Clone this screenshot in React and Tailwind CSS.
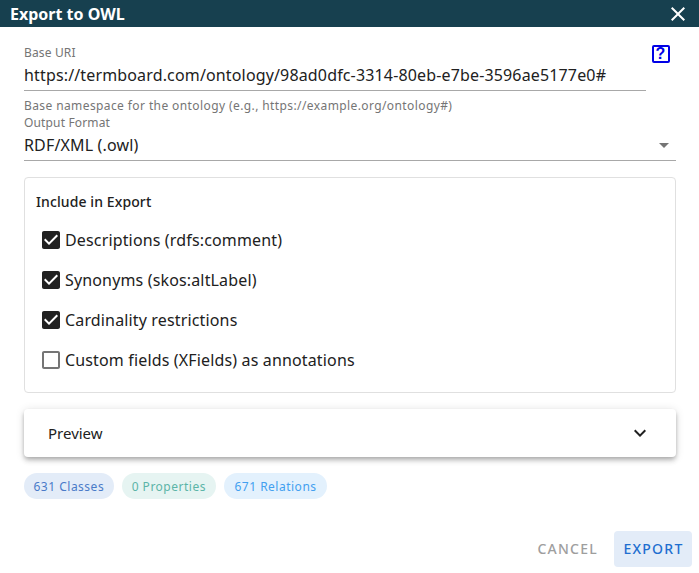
function CheckRow({ label, checked }) {
  return (
    <div className="flex h-10 items-center pl-[3px]">
      {checked ? (
        <svg viewBox="0 0 24 24" className="h-6 w-6 fill-[#212121]">
          <path d="M19 3H5c-1.11 0-2 .9-2 2v14c0 1.1.89 2 2 2h14c1.11 0 2-.9 2-2V5c0-1.1-.89-2-2-2zm-9 14-5-5 1.41-1.41L10 14.17l7.59-7.59L19 8l-9 9z" />
        </svg>
      ) : (
        <svg viewBox="0 0 24 24" className="h-6 w-6 fill-[#757575]">
          <path d="M19 5v14H5V5h14m0-2H5c-1.1 0-2 .9-2 2v14c0 1.1.9 2 2 2h14c1.1 0 2-.9 2-2V5c0-1.1-.9-2-2-2z" />
        </svg>
      )}
      <span className="ml-[2px] text-base leading-6 tracking-[0.15px] text-[#212121]">{label}</span>
    </div>
  )
}

function Chip({ className, children }) {
  return (
    <span className={`flex h-[26px] items-center rounded-full pt-[1px] text-xs tracking-[0.5px] ${className}`}>
      {children}
    </span>
  )
}

export default function App() {
  return (
    <div className="flex h-[573px] w-[699px] flex-col overflow-hidden bg-white font-['Noto_Sans',sans-serif] text-[#212121]">
      {/* Title bar */}
      <div className="flex h-[27px] shrink-0 items-center justify-between bg-[#17404f] pr-[9px] pl-[10px] text-white">
        <span className="text-base leading-6 font-bold">Export to OWL</span>
        <svg viewBox="0 0 24 24" className="h-6 w-6 fill-white">
          <path d="M19 6.41 17.59 5 12 10.59 6.41 5 5 6.41 10.59 12 5 17.59 6.41 19 12 13.41 17.59 19 19 17.59 13.41 12z" />
        </svg>
      </div>

      <div className="flex flex-1 flex-col pt-[18px] pr-[23px] pl-6">
        {/* Base URI */}
        <div className="flex items-start">
          <div className="w-[622px]">
            <div className="text-xs leading-[16px] tracking-[0.15px] text-[#757575]">Base URI</div>
            <div className="h-[30px] border-b border-[#a8a8a8] pt-[2px] text-base leading-6 tracking-[0.15px] whitespace-nowrap">
              https://termboard.com/ontology/98ad0dfc-3314-80eb-e7be-3596ae5177e0#
            </div>
          </div>
          <div className="ml-[5.5px] flex h-[18px] w-[18px] items-center justify-center rounded-[2px] border-2 border-[#0000e6] font-['Liberation_Sans',sans-serif] text-[16px] leading-none font-bold text-[#0000e6]">
            ?
          </div>
        </div>
        <div className="mt-[7px] text-xs leading-[16px] tracking-[0.4px] text-[#757575]">
          Base namespace for the ontology (e.g., https://example.org/ontology#)
        </div>

        {/* Output format */}
        <div className="mt-[1px] text-xs leading-[16px] tracking-[0.15px] text-[#757575]">Output Format</div>
        <div className="flex h-[30px] items-start justify-between border-b border-[#a8a8a8] pt-[2px]">
          <span className="text-base leading-6 tracking-[0.15px]">RDF/XML (.owl)</span>
          <svg viewBox="0 0 24 24" className="h-6 w-6 fill-[#757575]">
            <path d="M7 10l5 5 5-5z" />
          </svg>
        </div>

        {/* Include in export */}
        <div className="mt-4 h-[216px] rounded border border-[#e0e0e0] pt-[14px] pr-3 pl-[11px]">
          <div className="text-sm leading-[20px] font-medium tracking-[0.1px]">Include in Export</div>
          <div className="mt-[8px]">
            <CheckRow label="Descriptions (rdfs:comment)" checked />
            <CheckRow label="Synonyms (skos:altLabel)" checked />
            <CheckRow label="Cardinality restrictions" checked />
            <CheckRow label="Custom fields (XFields) as annotations" />
          </div>
        </div>

        {/* Preview accordion */}
        <div className="mt-4 flex h-12 items-center justify-between rounded bg-white pr-6 pl-6 shadow-[0_2px_4px_-1px_rgba(0,0,0,0.2),0_4px_5px_0_rgba(0,0,0,0.14),0_1px_10px_0_rgba(0,0,0,0.12)]">
          <span className="text-[15px] leading-5">Preview</span>
          <svg viewBox="0 0 24 24" className="h-6 w-6 fill-[#212121]">
            <path d="M16.59 8.59 12 13.17 7.41 8.59 6 10l6 6 6-6z" />
          </svg>
        </div>

        {/* Counts */}
        <div className="mt-4 flex gap-2">
          <Chip className="bg-[#e3ecf8] px-[9.5px] text-[#4a7bc8]">631 Classes</Chip>
          <Chip className="bg-[#e6f4f2] px-[10px] text-[#5cb5a8]">0 Properties</Chip>
          <Chip className="bg-[#e3f1fd] px-[10.5px] text-[#42a0f0]">671 Relations</Chip>
        </div>

        {/* Actions */}
        <div className="mt-8 -mr-4 flex items-center justify-end gap-2">
          <button className="h-9 px-2 text-sm font-medium tracking-[1.25px] text-[#9e9e9e]">CANCEL</button>
          <button className="h-9 w-[78px] rounded bg-[#e3ecf8] pl-[1px] text-sm font-medium tracking-[1.25px] text-[#1e6fd0]">EXPORT</button>
        </div>
      </div>
    </div>
  )
}
